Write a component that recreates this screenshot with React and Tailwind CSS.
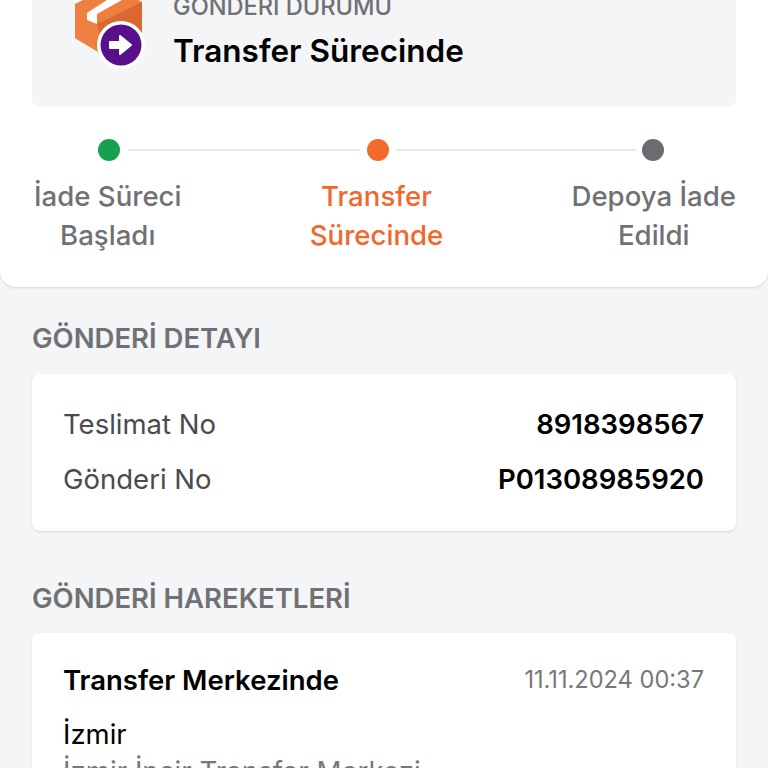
const PackageIcon = () => (
  <svg viewBox="0 0 68 68" className="mt-[20px] h-[68px] w-[68px] shrink-0 overflow-visible">
    {/* box, the top of it runs off the screen */}
    <path d="M0 4 L36 -14 L67 2 L67 34 L30 56 L0 38 Z" fill="#ee7f3f" />
    <path d="M22 24 L67 2 L67 34 L30 56 Z" fill="#d9692f" />
    <path d="M0 5 L22 24 L27 54 L0 38 Z" fill="#ef8042" />
    <path d="M12 13 L35 -2 L47 0 L22 14 L22 24 L12 20 Z" fill="#ffffff" />
    <circle cx="46" cy="45" r="24" fill="#ffffff" />
    <circle cx="46" cy="45" r="20.5" fill="#580f8b" />
    <path d="M35 42 H45 V36 L56 45 L45 54 V48 H35 Z" fill="#ffffff" stroke="#ffffff" strokeWidth="2" strokeLinejoin="round" />
  </svg>
);

const Step = ({ title, sub, color }) => (
  <div className={`text-center text-[27.6px] leading-[39px] font-medium ${color}`}>
    <div>{title}</div>
    <div>{sub}</div>
  </div>
);

const Row = ({ label, value }) => (
  <div className="flex items-center justify-between">
    <span className="text-[27.5px] text-[#4a4b4e]">{label}</span>
    <span className="text-[27.5px] font-semibold text-black">{value}</span>
  </div>
);

const App = () => {
  return (
    <div
      className="h-[768px] w-[768px] overflow-hidden bg-[#f4f5f7]"
      style={{ fontFamily: '"Inter", sans-serif' }}
    >
      <div className="-mt-[20px] rounded-b-2xl bg-white px-8 pb-[32px] shadow-sm">
        <div className="flex h-[127px] items-start gap-[31px] rounded-b-lg bg-[#f4f5f7] pl-[43px]">
          <PackageIcon />
          <div className="-ml-px pt-[11px]">
            <div className="text-[23.6px] leading-[32px] font-medium text-[#6f7175]">GÖNDERİ DURUMU</div>
            <div className="mt-[8px] text-[31.5px] leading-[40px] font-semibold text-black">Transfer Sürecinde</div>
          </div>
        </div>

        <div className="mt-[32px] flex items-center pl-[66px]">
          <div className="h-[22px] w-[22px] rounded-full bg-[#16a050]" />
          <div className="mr-[7px] ml-2 h-[2px] w-[232px] bg-[#e5e7eb]" />
          <div className="h-[22px] w-[22px] rounded-full bg-[#f26b2a]" />
          <div className="mr-[6px] ml-[7px] h-[2px] w-[240px] bg-[#e5e7eb]" />
          <div className="h-[22px] w-[22px] rounded-full bg-[#6b6c70]" />
        </div>
        <div className="mt-[16px] flex justify-between pl-[2px]">
          <Step title="İade Süreci" sub="Başladı" color="text-[#6f7175]" />
          <Step title="Transfer" sub="Sürecinde" color="text-[#f0692c]" />
          <Step title="Depoya İade" sub="Edildi" color="text-[#6f7175]" />
        </div>
      </div>

      <div className="px-8">
        <h2 className="mt-[32px] text-[27.5px] leading-[38px] font-semibold text-[#6f7175]">GÖNDERİ DETAYI</h2>
        <div className="mt-[17px] flex h-[157px] flex-col justify-center gap-[14px] rounded-lg bg-white pr-8 pb-px pl-[31px] shadow-sm">
          <Row label="Teslimat No" value="8918398567" />
          <Row label="Gönderi No" value="P01308985920" />
        </div>

        <h2 className="mt-[48px] text-[27.5px] leading-[38px] font-semibold text-[#6f7175]">GÖNDERİ HAREKETLERİ</h2>
        <div className="mt-[16px] rounded-lg bg-white pt-[27px] pr-8 pb-8 pl-[31px] shadow-sm">
          <div className="flex items-center justify-between">
            <span className="text-[27.5px] leading-[40px] font-semibold text-black">Transfer Merkezinde</span>
            <span className="text-[23.6px] leading-[40px] text-[#77787c]">11.11.2024 00:37</span>
          </div>
          <div className="mt-[14px] text-[27.5px] leading-[40px] text-black">İzmir</div>
          <div className="text-[27.7px] leading-[35px] text-[#77787c]">İzmir İncir Transfer Merkezi</div>
        </div>
      </div>
    </div>
  );
};

export default App;
